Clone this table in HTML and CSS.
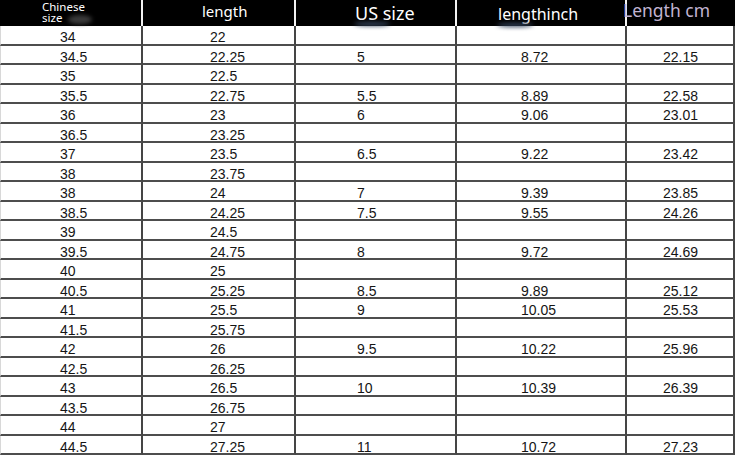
FILE: index.html
```html
<!DOCTYPE html>
<html lang="en">
<head>
<meta charset="utf-8">
<title>Size chart</title>
<link rel="stylesheet" href="styles.css">
</head>
<body>
<div class="chart">
  <div class="hd c1"><span class="two">Chinese<br>size</span><span class="smudge grey"></span></div>
  <div class="hd c2">length</div>
  <div class="hd c3">US size<span class="smudge blue"></span></div>
  <div class="hd c4">lengthinch<span class="smudge blue"></span></div>
  <div class="hd c5"><span class="purple">Length cm</span></div>

  <div class="c c1">34</div><div class="c c2">22</div><div class="c c3"></div><div class="c c4"></div><div class="c c5"></div>
  <div class="c c1">34.5</div><div class="c c2">22.25</div><div class="c c3">5</div><div class="c c4">8.72</div><div class="c c5">22.15</div>
  <div class="c c1">35</div><div class="c c2">22.5</div><div class="c c3"></div><div class="c c4"></div><div class="c c5"></div>
  <div class="c c1">35.5</div><div class="c c2">22.75</div><div class="c c3">5.5</div><div class="c c4">8.89</div><div class="c c5">22.58</div>
  <div class="c c1">36</div><div class="c c2">23</div><div class="c c3">6</div><div class="c c4">9.06</div><div class="c c5">23.01</div>
  <div class="c c1">36.5</div><div class="c c2">23.25</div><div class="c c3"></div><div class="c c4"></div><div class="c c5"></div>
  <div class="c c1">37</div><div class="c c2">23.5</div><div class="c c3">6.5</div><div class="c c4">9.22</div><div class="c c5">23.42</div>
  <div class="c c1">38</div><div class="c c2">23.75</div><div class="c c3"></div><div class="c c4"></div><div class="c c5"></div>
  <div class="c c1">38</div><div class="c c2">24</div><div class="c c3">7</div><div class="c c4">9.39</div><div class="c c5">23.85</div>
  <div class="c c1">38.5</div><div class="c c2">24.25</div><div class="c c3">7.5</div><div class="c c4">9.55</div><div class="c c5">24.26</div>
  <div class="c c1">39</div><div class="c c2">24.5</div><div class="c c3"></div><div class="c c4"></div><div class="c c5"></div>
  <div class="c c1">39.5</div><div class="c c2">24.75</div><div class="c c3">8</div><div class="c c4">9.72</div><div class="c c5">24.69</div>
  <div class="c c1">40</div><div class="c c2">25</div><div class="c c3"></div><div class="c c4"></div><div class="c c5"></div>
  <div class="c c1">40.5</div><div class="c c2">25.25</div><div class="c c3">8.5</div><div class="c c4">9.89</div><div class="c c5">25.12</div>
  <div class="c c1">41</div><div class="c c2">25.5</div><div class="c c3">9</div><div class="c c4">10.05</div><div class="c c5">25.53</div>
  <div class="c c1">41.5</div><div class="c c2">25.75</div><div class="c c3"></div><div class="c c4"></div><div class="c c5"></div>
  <div class="c c1">42</div><div class="c c2">26</div><div class="c c3">9.5</div><div class="c c4">10.22</div><div class="c c5">25.96</div>
  <div class="c c1">42.5</div><div class="c c2">26.25</div><div class="c c3"></div><div class="c c4"></div><div class="c c5"></div>
  <div class="c c1">43</div><div class="c c2">26.5</div><div class="c c3">10</div><div class="c c4">10.39</div><div class="c c5">26.39</div>
  <div class="c c1">43.5</div><div class="c c2">26.75</div><div class="c c3"></div><div class="c c4"></div><div class="c c5"></div>
  <div class="c c1">44</div><div class="c c2">27</div><div class="c c3"></div><div class="c c4"></div><div class="c c5"></div>
  <div class="c c1">44.5</div><div class="c c2">27.25</div><div class="c c3">11</div><div class="c c4">10.72</div><div class="c c5">27.23</div>
</div>
</body>
</html>
```
FILE: styles.css
```css
html, body {
  margin: 0;
  padding: 0;
  background: #ffffff;
}

.chart {
  width: 735px;
  height: 455px;
  overflow: hidden;
  display: grid;
  grid-template-columns: 143px 153px 161px 170px 108px;
  grid-template-rows: 26px repeat(22, 19.5px);
  align-items: stretch;
}

.hd {
  position: relative;
  box-sizing: border-box;
  background: #000000;
  color: #ffffff;
  font-family: "Noto Sans", "Open Sans", sans-serif;
  line-height: 20px;
  border-right: 2px solid #f2f2f2;
  white-space: nowrap;
  overflow: visible;
}

.hd.c1 {
  padding: 1px 0 0 42px;
  font-size: 11.5px;
}

.hd .two {
  display: block;
  line-height: 11px;
}

.hd.c2 {
  padding: 1px 0 0 59px;
  font-size: 15px;
}

.hd.c3 {
  padding: 3px 0 0 59px;
  font-size: 18px;
}

.hd.c4 {
  padding: 4px 0 0 41px;
  font-size: 16px;
}

.hd.c5 {
  padding: 1px 0 0 0;
  font-size: 17.5px;
  line-height: 19px;
  border-right: none;
}

.purple {
  display: block;
  margin-left: -4px;
  color: #c2b4d2;
}

.smudge {
  position: absolute;
  border-radius: 50%;
  filter: blur(2px);
}

.smudge.grey {
  left: 68px;
  top: 15px;
  width: 24px;
  height: 9px;
  background: #3a3a3a;
}

.smudge.blue {
  left: 58px;
  top: 22px;
  width: 36px;
  height: 4px;
  background: #34455e;
}

.hd.c4 .smudge.blue {
  left: 40px;
  top: 23px;
}

.c {
  box-sizing: border-box;
  font-family: "Liberation Sans", Arial, sans-serif;
  font-size: 14px;
  color: #151515;
  line-height: 19.5px;
  padding-top: 2px;
  border-right: 2px solid #454545;
  border-bottom: 2px solid #4d4d4d;
  white-space: nowrap;
  overflow: visible;
}

.c.c1 {
  padding-left: 59px;
  border-left: 1px solid #d8d8d8;
}

.c.c2 {
  padding-left: 67px;
}

.c.c3 {
  padding-left: 61px;
}

.c.c4 {
  padding-left: 64px;
}

.c.c5 {
  padding-left: 36px;
}
```
